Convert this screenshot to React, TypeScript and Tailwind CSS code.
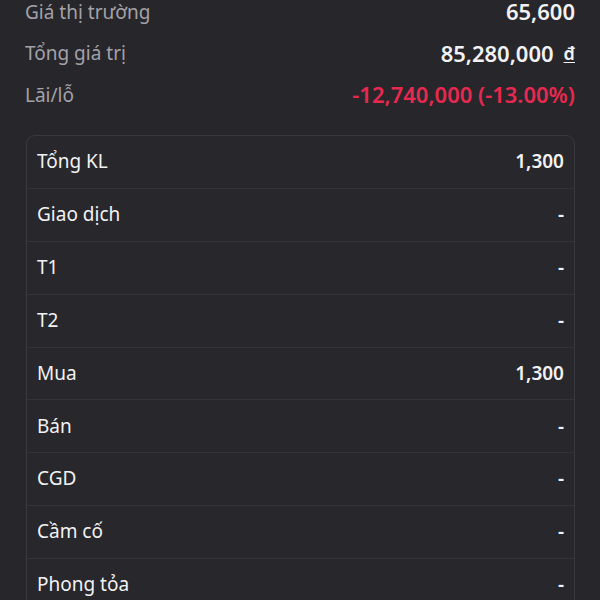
import React from 'react';

const summary = [
  { label: 'Giá thị trường', value: '65,600', tone: 'text-[#f2f2f4]' },
  { label: 'Tổng giá trị', value: '85,280,000', tone: 'text-[#f2f2f4]', currency: true },
  { label: 'Lãi/lỗ', value: '-12,740,000 (-13.00%)', tone: 'text-[#e8294f]' },
];

const holdings = [
  { label: 'Tổng KL', value: '1,300' },
  { label: 'Giao dịch', value: '-' },
  { label: 'T1', value: '-' },
  { label: 'T2', value: '-' },
  { label: 'Mua', value: '1,300' },
  { label: 'Bán', value: '-' },
  { label: 'CGD', value: '-' },
  { label: 'Cầm cố', value: '-' },
  { label: 'Phong tỏa', value: '-' },
];

export default function App() {
  return (
    <div
      className="w-[600px] h-[600px] overflow-hidden bg-[#27262b] px-[25px]"
      style={{ fontFamily: '"Noto Sans", "Open Sans", sans-serif' }}
    >
      {/* Summary */}
      <div className="-mt-[9px] flex flex-col">
        {summary.map((row) => (
          <div key={row.label} className="h-[41.5px] flex items-center justify-between">
            <span className="text-[19px] text-[#a3a2a8]">{row.label}</span>
            <span className={`text-[22px] font-semibold ${row.tone} flex items-center`}>
              {row.value}
              {row.currency && <span className="ml-[10px] underline underline-offset-2 text-[18px]">đ</span>}
            </span>
          </div>
        ))}
      </div>

      {/* Holdings card */}
      <div className="mt-[19px] ml-px rounded-[9px] border border-[#3a393f] bg-[#28272c]">
        {holdings.map((row, i) => (
          <div
            key={row.label}
            className={`h-[52.8px] pb-[1px] flex items-center justify-between px-[10px] ${i > 0 ? 'border-t border-[#343338]' : ''}`}
          >
            <span className="text-[19px] text-[#f2f2f4]">{row.label}</span>
            <span className="text-[19px] font-semibold text-[#f2f2f4]">{row.value}</span>
          </div>
        ))}
      </div>
    </div>
  );
}
